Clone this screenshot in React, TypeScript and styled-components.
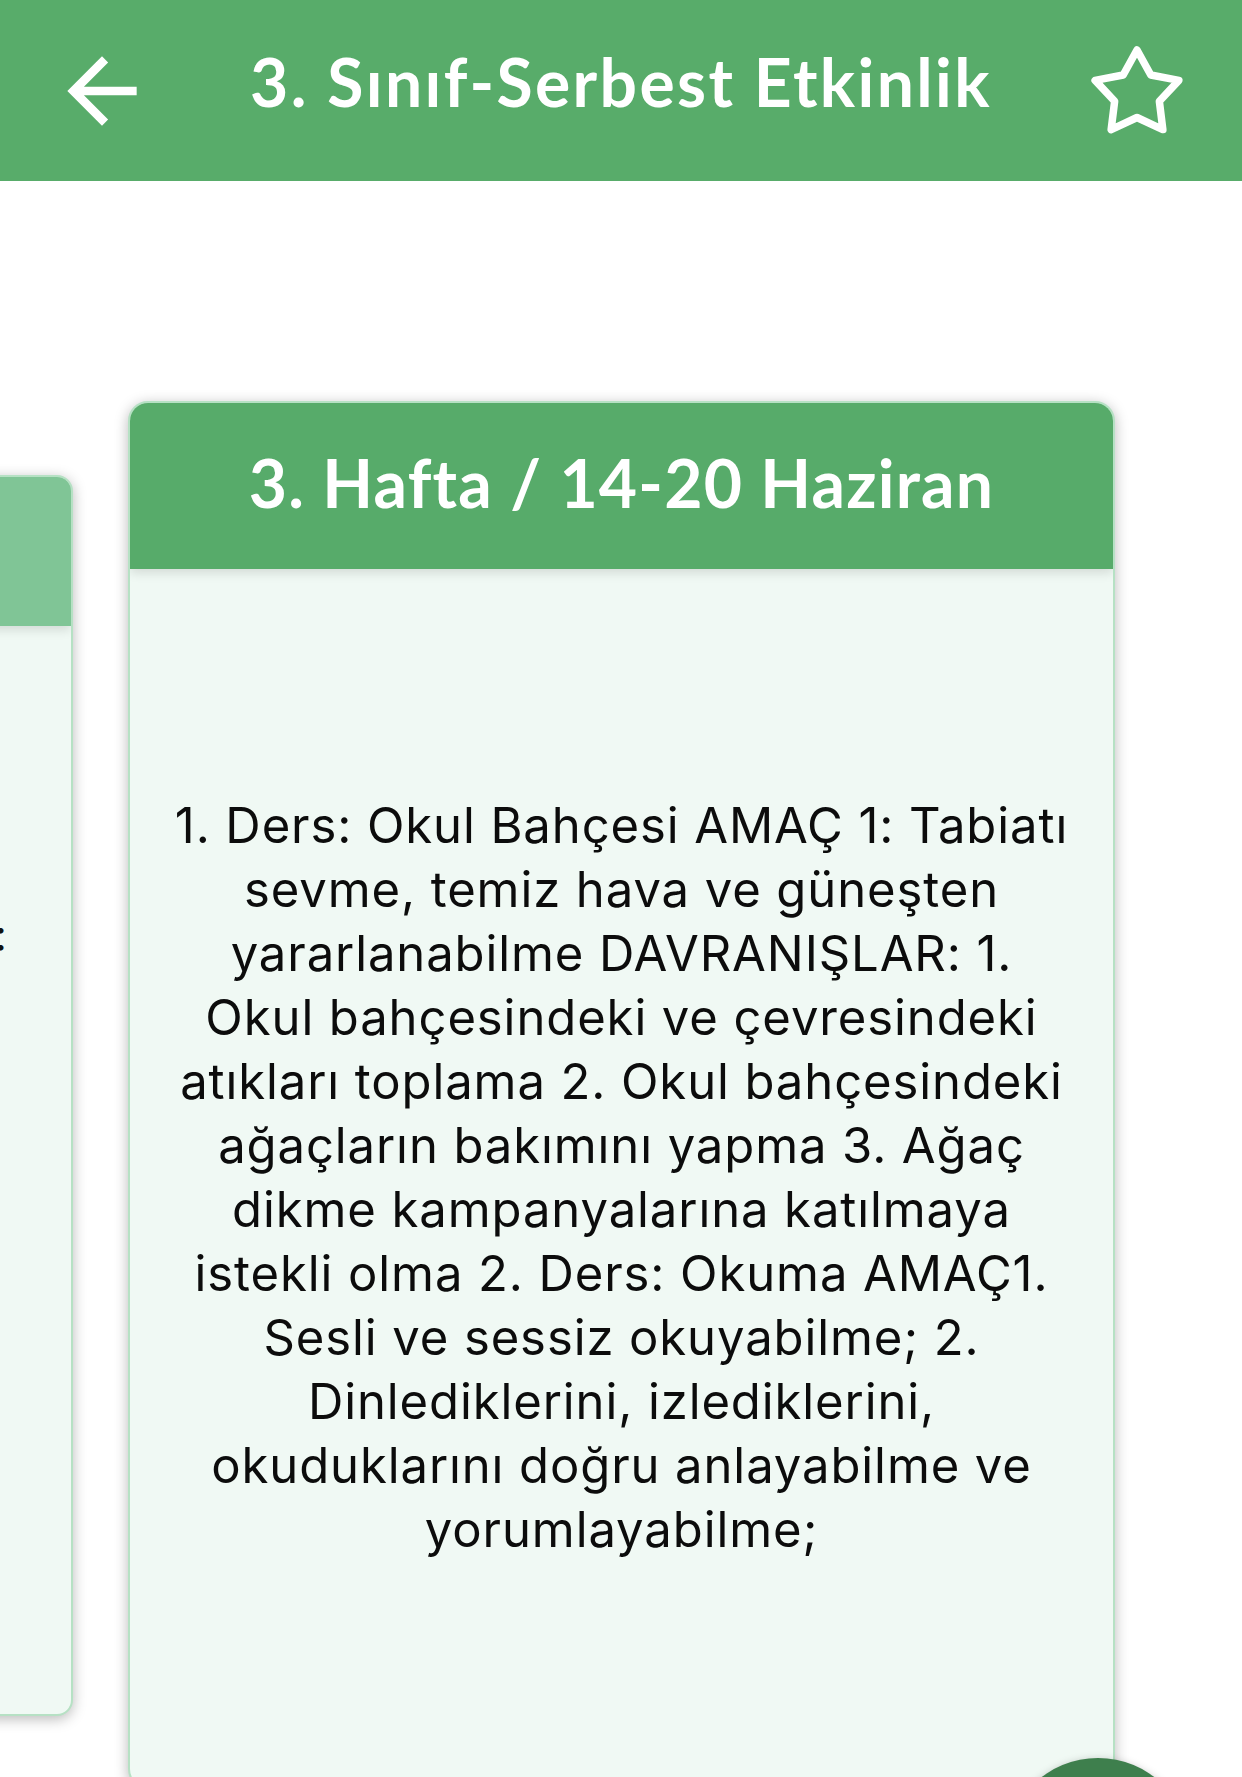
import styled, { createGlobalStyle } from 'styled-components';

const GlobalStyle = createGlobalStyle`
  html, body {
    margin: 0;
    padding: 0;
    background: #ffffff;
  }
  body {
    width: 1242px;
    height: 1777px;
    overflow: hidden;
    font-family: Inter, "Noto Sans", sans-serif;
  }
`;

const Screen = styled.div`
  position: relative;
  width: 1242px;
  height: 1777px;
  overflow: hidden;
  background: #ffffff;
`;

const TopBar = styled.header`
  height: 181px;
  background: #58ac6a;
  display: grid;
  grid-template-columns: 180px 1fr 180px;
  align-items: center;
`;

const IconButton = styled.button<{ $align: 'start' | 'end' }>`
  border: none;
  background: none;
  padding: 0;
  display: flex;
  justify-content: ${(p) => (p.$align === 'start' ? 'flex-start' : 'flex-end')};
  padding-left: ${(p) => (p.$align === 'start' ? '50px' : '0')};
  padding-right: ${(p) => (p.$align === 'end' ? '55px' : '0')};
  color: #ffffff;
  cursor: pointer;
`;

const Title = styled.h1`
  margin: 0 0 18px;
  text-align: center;
  color: #ffffff;
  font-family: Lato, "Open Sans", sans-serif;
  font-weight: 700;
  font-size: 66px;
  letter-spacing: 2.4px;
`;

const Carousel = styled.div`
  height: 1828px;
  display: flex;
  align-items: center;
  gap: 55px;
  margin-left: -815px;
`;

const Card = styled.section<{ $w: number; $h: number; $r: number }>`
  flex: none;
  width: ${(p) => p.$w}px;
  height: ${(p) => p.$h}px;
  border-radius: ${(p) => p.$r}px;
  border: 2px solid #b6e1c4;
  box-sizing: border-box;
  background: #f0f9f4;
  box-shadow: 0 3px 14px rgba(0, 0, 0, 0.28);
  overflow: hidden;
  display: flex;
  flex-direction: column;
`;

const CardHead = styled.div<{ $h: number; $dim?: boolean }>`
  position: relative;
  z-index: 1;
  height: ${(p) => p.$h}px;
  flex: none;
  background: ${(p) => (p.$dim ? '#80c596' : '#57ab6a')};
  box-shadow: 0 4px 10px rgba(0, 0, 0, 0.12);
  display: flex;
  align-items: center;
  justify-content: center;
`;

const CardTitle = styled.h2`
  margin: 0 0 8px;
  color: #ffffff;
  font-family: Lato, "Open Sans", sans-serif;
  font-weight: 700;
  font-size: 66px;
  letter-spacing: 1.2px;
`;

const CardBody = styled.div`
  flex: 1;
  display: flex;
  align-items: center;
  justify-content: center;
  padding: 0 43px;
`;

const LeftBody = styled.div`
  flex: 1;
  padding: 284px 64px 0 0;
  text-align: right;
  font-size: 43px;
  line-height: 58px;
  color: #111111;
  white-space: nowrap;
`;

const Content = styled.p`
  margin: 0;
  text-align: center;
  color: #0c0c0c;
  font-family: Inter, "Noto Sans", sans-serif;
  font-size: 49px;
  line-height: 64px;
  letter-spacing: 0.9px;
`;

const Fab = styled.div`
  position: absolute;
  left: 1005px;
  top: 1758px;
  width: 186px;
  height: 186px;
  border-radius: 50%;
  background: #3e7f4d;
  box-shadow: 0 2px 8px rgba(0, 0, 0, 0.25);
`;

function StarOutline() {
  const pts: string[] = [];
  for (let i = 0; i < 10; i++) {
    const r = i % 2 === 0 ? 44 : 23.5;
    const a = (Math.PI / 5) * i - Math.PI / 2;
    pts.push(`${(50 + r * Math.cos(a)).toFixed(2)},${(53 + r * Math.sin(a)).toFixed(2)}`);
  }
  return (
    <svg width="100" height="100" viewBox="0 0 100 100">
      <polygon
        points={pts.join(' ')}
        fill="none"
        stroke="#ffffff"
        strokeWidth="7.5"
        strokeLinejoin="round"
      />
    </svg>
  );
}

const text =
  '1. Ders: Okul Bahçesi AMAÇ 1: Tabiatı sevme, temiz hava ve güneşten yararlanabilme DAVRANIŞLAR: 1. Okul bahçesindeki ve çevresindeki atıkları toplama 2. Okul bahçesindeki ağaçların bakımını yapma 3. Ağaç dikme kampanyalarına katılmaya istekli olma 2. Ders: Okuma AMAÇ1. Sesli ve sessiz okuyabilme; 2. Dinlediklerini, izlediklerini, okuduklarını doğru anlayabilme ve yorumlayabilme;';

export default function App() {
  return (
    <Screen>
      <GlobalStyle />
      <TopBar>
        <IconButton $align="start" aria-label="Geri">
          <svg width="104" height="104" viewBox="0 0 24 24" fill="#ffffff">
            <path d="M20 11H7.83l5.59-5.59L12 4l-8 8 8 8 1.41-1.41L7.83 13H20v-2z" />
          </svg>
        </IconButton>
        <Title>3. Sınıf-Serbest Etkinlik</Title>
        <IconButton $align="end" aria-label="Favori">
          <StarOutline />
        </IconButton>
      </TopBar>

      <Carousel>
        <Card $w={888} $h={1241} $r={16}>
          <CardHead $h={149} $dim />
          <LeftBody>2. Ders: Okuma AMAÇ 1:</LeftBody>
        </Card>
        <Card $w={987} $h={1388} $r={20}>
          <CardHead $h={166}>
            <CardTitle>3. Hafta / 14-20 Haziran</CardTitle>
          </CardHead>
          <CardBody>
            <Content>{text}</Content>
          </CardBody>
        </Card>
      </Carousel>

      <Fab />
    </Screen>
  );
}
